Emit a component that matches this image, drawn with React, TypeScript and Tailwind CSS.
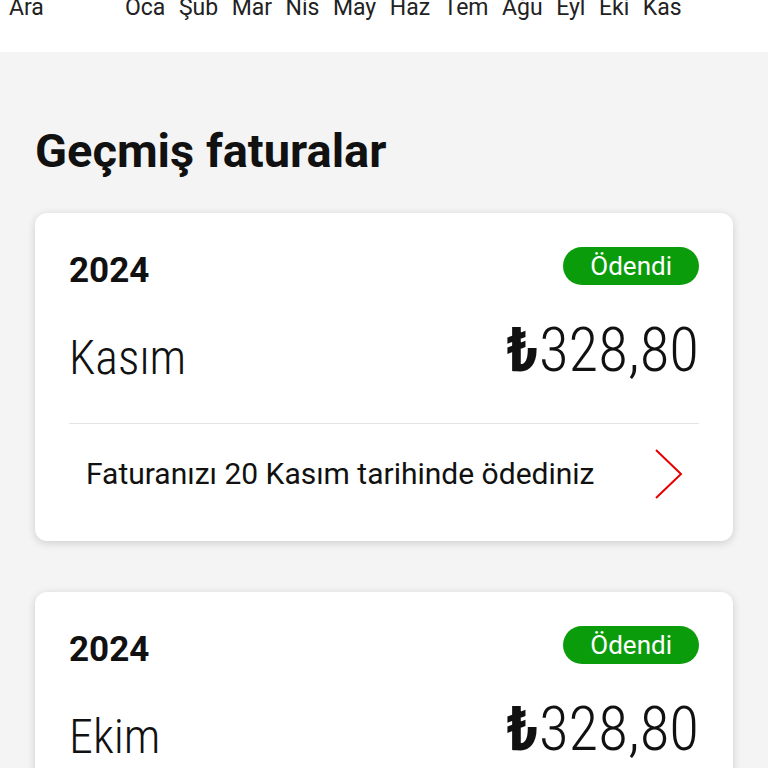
const font = { fontFamily: 'Roboto, "Noto Sans", sans-serif' };

function Chevron() {
  return (
    <svg width="30" height="52" viewBox="0 0 30 52" fill="none">
      <path d="M2 2 L27 26 L2 50" stroke="#e60000" strokeWidth="2" strokeLinejoin="miter" />
    </svg>
  );
}

function Card({ month, note }: { month: string; note?: string }) {
  return (
    <div className="bg-white rounded-[12px] shadow-[0_2px_8px_rgba(0,0,0,0.16)] px-[34px]">
      <div className="flex items-start justify-between pt-[34px]">
        <span className="text-[35px] font-bold leading-none text-[#111] mt-[6px]">2024</span>
        <span className="bg-[#0a9c0a] text-white text-[26px] leading-[38px] h-[38px] px-[27px] rounded-full">Ödendi</span>
      </div>
      <div className="flex items-end justify-between mt-[32px]">
        <span className="text-[48px] font-light leading-none text-[#111] [font-stretch:condensed] mb-[-2px]">{month}</span>
        <span className="text-[61px] font-light leading-none text-[#111] [font-stretch:condensed] mb-[-1px]">
          <span className="font-bold">₺</span>328,80
        </span>
      </div>
      {note && (
        <>
          <div className="h-px bg-[#e4e4e4] mt-[43px]" />
          <div className="flex items-center justify-between pl-[17px] pr-[15px] pt-[24px] pb-[41px]">
            <span className="text-[30px] text-[#111] leading-none">{note}</span>
            <Chevron />
          </div>
        </>
      )}
    </div>
  );
}

export default function App() {
  const months = ['Oca', 'Şub', 'Mar', 'Nis', 'May', 'Haz', 'Tem', 'Ağu', 'Eyl', 'Eki', 'Kas'];
  return (
    <div style={font} className="w-[768px] h-[768px] overflow-hidden bg-[#f4f4f4]">
      <div className="bg-white h-[52px] relative overflow-hidden">
        <div className="flex items-start text-[23px] text-[#222] leading-none mt-[-4px] pl-[9px]">
          <span className="w-[116px]">Ara</span>
          <div className="flex gap-[13.5px]">
            {months.map((m) => (
              <span key={m}>{m}</span>
            ))}
          </div>
        </div>
      </div>
      <div className="px-[35px]">
        <h1 className="text-[47px] font-bold text-[#111] pt-[75px] leading-none mb-[39px]">Geçmiş faturalar</h1>
        <Card month="Kasım" note="Faturanızı 20 Kasım tarihinde ödediniz" />
        <div className="h-[51px]" />
        <Card month="Ekim" note="Faturanızı 20 Ekim tarihinde ödediniz" />
      </div>
    </div>
  );
}
